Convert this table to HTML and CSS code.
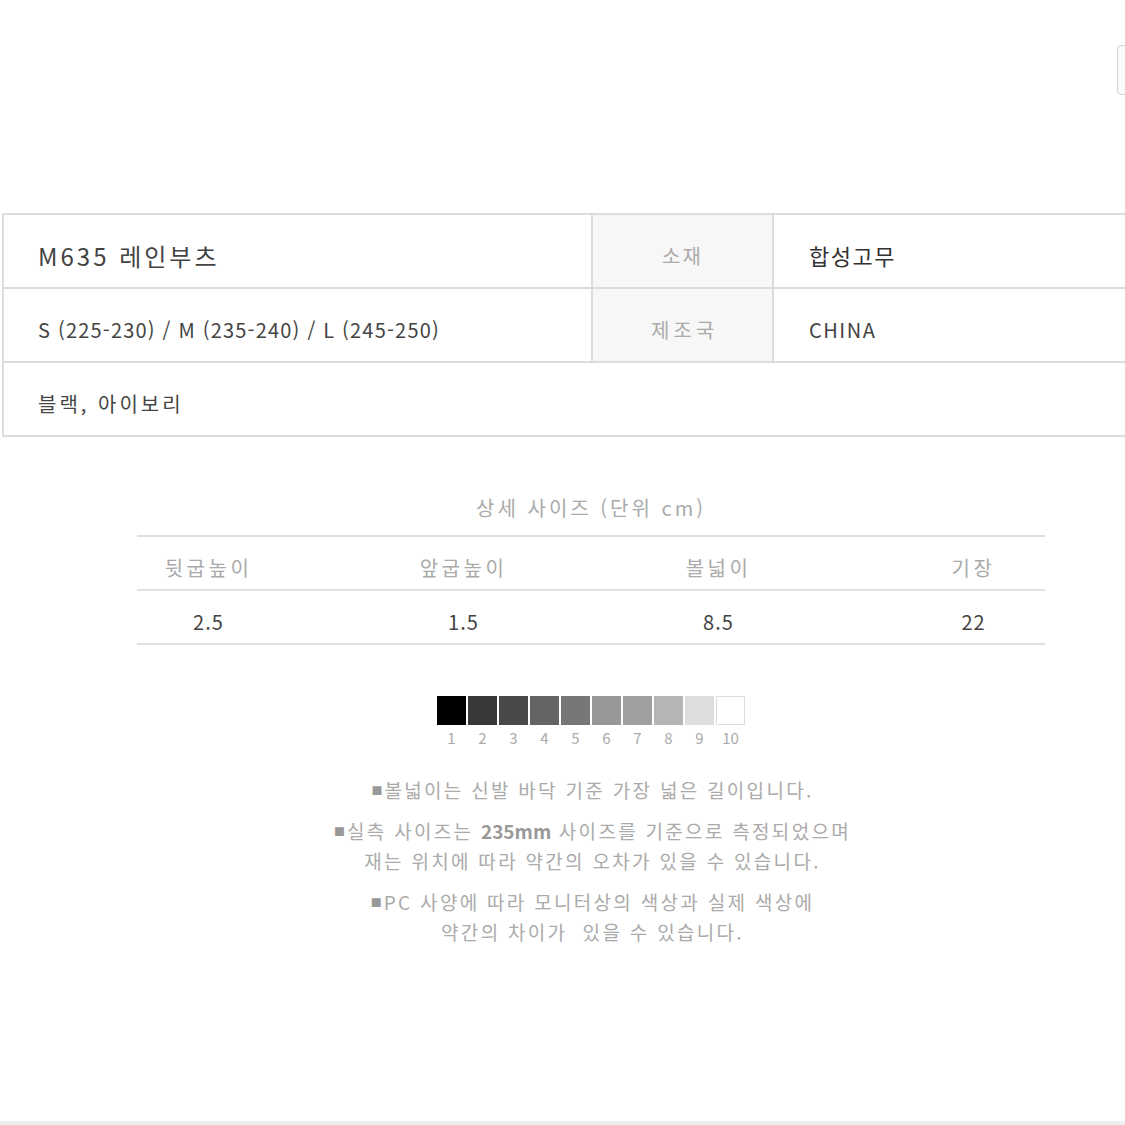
FILE: index.html
```html
<!DOCTYPE html>
<html lang="ko">
<head>
    <meta charset="UTF-8">
    <meta name="viewport" content="width=device-width, initial-scale=1.0">
    <title>M635 레인부츠</title>
    <link rel="stylesheet" href="styles.css">
</head>
<body>
    <div class="page">
        <div class="top-bar">
            <span class="side-tab"></span>
        </div>

        <div class="spec">
            <div class="cell name">M635 레인부츠</div>
            <div class="cell label">소재</div>
            <div class="cell value strong">합성고무</div>

            <div class="cell sizes">S (225-230) / M (235-240) / L (245-250)</div>
            <div class="cell label wide">제조국</div>
            <div class="cell value latin">CHINA</div>

            <div class="cell colors">블랙, 아이보리</div>
        </div>

        <section class="detail">
            <h2>상세 사이즈 (단위 cm)</h2>
            <div class="size-table">
                <div class="size-row head">
                    <span>뒷굽높이</span>
                    <span>앞굽높이</span>
                    <span>볼넓이</span>
                    <span>기장</span>
                </div>
                <div class="size-row">
                    <span>2.5</span>
                    <span>1.5</span>
                    <span>8.5</span>
                    <span>22</span>
                </div>
            </div>
        </section>

        <div class="scale">
            <div class="swatches">
                <span class="sw s1"></span>
                <span class="sw s2"></span>
                <span class="sw s3"></span>
                <span class="sw s4"></span>
                <span class="sw s5"></span>
                <span class="sw s6"></span>
                <span class="sw s7"></span>
                <span class="sw s8"></span>
                <span class="sw s9"></span>
                <span class="sw s10"></span>
            </div>
            <div class="steps">
                <span>1</span><span>2</span><span>3</span><span>4</span><span>5</span>
                <span>6</span><span>7</span><span>8</span><span>9</span><span>10</span>
            </div>
        </div>

        <div class="notes">
            <p><i>■</i>볼넓이는 신발 바닥 기준 가장 넓은 길이입니다.</p>
            <p><i>■</i>실측 사이즈는 <b>235mm</b> 사이즈를 기준으로 측정되었으며<br>재는 위치에 따라 약간의 오차가 있을 수 있습니다.</p>
            <p><i>■</i>PC 사양에 따라 모니터상의 색상과 실제 색상에<br>약간의 차이가 &nbsp;있을 수 있습니다.</p>
        </div>

        <div class="bottom-line"></div>
    </div>
</body>
</html>
```

FILE: styles.css
```css
/* Base */
body {
    margin: 0;
    background: #fff;
    font-family: 'Noto Sans CJK KR', 'Noto Sans', sans-serif;
    color: #444;
    overflow: hidden;
}

.page {
    width: 1125px;
    height: 1125px;
    position: relative;
    overflow: hidden;
}

/* Top strip */
.top-bar {
    height: 213px;
    position: relative;
}

.side-tab {
    position: absolute;
    left: 1117px;
    top: 45px;
    width: 20px;
    height: 48px;
    border: 1px solid #d4d4d4;
    border-radius: 4px;
    background: #fafafa;
}

/* Spec table */
.spec {
    display: grid;
    grid-template-columns: 589px 181px 1fr;
    grid-auto-rows: 74px;
    width: 1140px;
    margin-left: 2px;
    border-top: 2px solid #dcdcdc;
    border-left: 2px solid #dcdcdc;
}

.cell {
    display: flex;
    align-items: center;
    padding-top: 8px;
    box-sizing: border-box;
    border-bottom: 2px solid #dcdcdc;
    font-size: 20px;
    color: #444;
}

.name {
    padding-left: 34px;
    font-size: 24px;
    letter-spacing: 3px;
    border-right: 2px solid #dcdcdc;
}

.sizes {
    padding-left: 34px;
    letter-spacing: 1.2px;
    border-right: 2px solid #dcdcdc;
}

.label {
    justify-content: center;
    background: #f7f7f7;
    color: #aaa;
    letter-spacing: 2px;
    border-right: 2px solid #dcdcdc;
}

.label.wide {
    letter-spacing: 4px;
    padding-left: 4px;
}

.value {
    padding-left: 35px;
}

.value.strong {
    font-size: 22px;
    color: #333;
    letter-spacing: 1.5px;
}

.value.latin {
    letter-spacing: 1.5px;
}

.colors {
    grid-column: 1 / -1;
    padding-left: 34px;
    letter-spacing: 3px;
}

/* Detail size */
.detail {
    width: 908px;
    margin: 56px 0 0 137px;
}

.detail h2 {
    margin: 0 0 13px;
    text-align: center;
    font-size: 20px;
    font-weight: 400;
    color: #aaa;
    letter-spacing: 3px;
}

.size-table {
    border-top: 2px solid #e0e0e0;
}

.size-row {
    display: flex;
    justify-content: space-between;
    align-items: center;
    height: 44px;
    padding-top: 8px;
    border-bottom: 2px solid #e0e0e0;
    font-size: 20px;
    color: #444;
}

.size-row span {
    width: 143px;
    text-align: center;
    letter-spacing: 1px;
}

.size-row.head span {
    color: #aaa;
    letter-spacing: 3.5px;
}

/* Grey scale */
.scale {
    width: 308px;
    margin: 51px 0 0 437px;
}

.swatches {
    display: flex;
    gap: 2px;
}

.sw {
    width: 29px;
    height: 29px;
    box-sizing: border-box;
}

.s1 { background: #000; }
.s2 { background: #383838; }
.s3 { background: #494949; }
.s4 { background: #646464; }
.s5 { background: #777; }
.s6 { background: #989898; }
.s7 { background: #9f9f9f; }
.s8 { background: #b5b5b5; }
.s9 { background: #dedede; }
.s10 { background: #fff; border: 1px solid #ddd; }

.steps {
    display: flex;
    gap: 2px;
    margin-top: 4px;
}

.steps span {
    width: 29px;
    text-align: center;
    font-size: 15px;
    line-height: 18px;
    color: #aaa;
}

/* Notes */
.notes {
    margin-top: 28px;
    padding-left: 60px;
    text-align: center;
    font-size: 19px;
    line-height: 30px;
    color: #aaa;
    letter-spacing: 2.3px;
}

.notes p {
    margin: 0 0 11px;
}

.notes i {
    font-style: normal;
    font-size: 11px;
    vertical-align: 3px;
    margin-right: 2px;
    letter-spacing: 0;
    color: #999;
}

.notes b {
    color: #999;
    letter-spacing: 0;
}

.bottom-line {
    position: absolute;
    left: 0;
    right: 0;
    bottom: 0;
    height: 4px;
    background: #eee;
}
```
